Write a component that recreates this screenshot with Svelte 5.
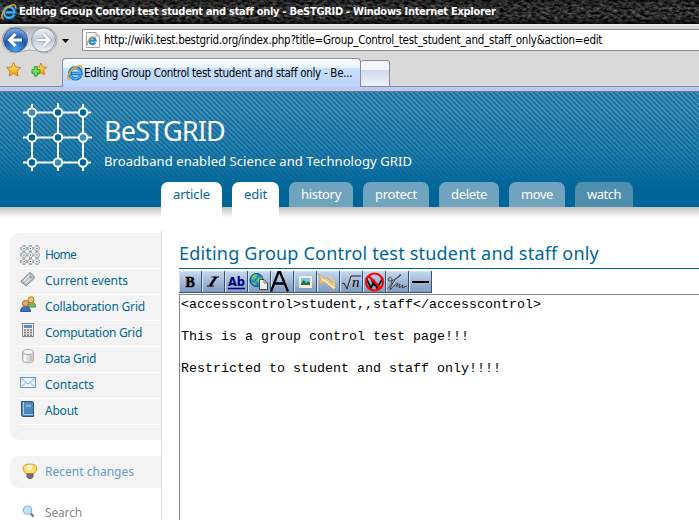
<script>
  const tabs = [
    { label: 'article', width: 61, text: 37, kind: 'on' },
    { label: 'edit', width: 47, text: 23, kind: 'on' },
    { label: 'history', width: 64, text: 40, kind: 'off' },
    { label: 'protect', width: 66, text: 42, kind: 'off' },
    { label: 'delete', width: 60, text: 36, kind: 'off' },
    { label: 'move', width: 56, text: 32, kind: 'off' },
    { label: 'watch', width: 58, text: 34, kind: 'dim' }
  ];
  const items = [
    { label: 'Home', icon: 'home', text: 31 },
    { label: 'Current events', icon: 'ticket', text: 83 },
    { label: 'Collaboration Grid', icon: 'people', text: 100 },
    { label: 'Computation Grid', icon: 'calc', text: 97 },
    { label: 'Data Grid', icon: 'data', text: 51 },
    { label: 'Contacts', icon: 'mail', text: 49 },
    { label: 'About', icon: 'book', text: 33 }
  ];
  const tools = ['bold', 'italic', 'link', 'globe', 'head', 'image', 'media', 'math', 'nowiki', 'sign', 'rule'];
  const nodes = [
    [34, 20, '#3f8cb5'], [60, 20, '#006699'], [85, 20, '#006699'],
    [34, 45, '#006699'], [60, 45, '#006699'], [85, 45, '#3f8cb5'],
    [34, 70, '#006699'], [60, 70, '#3f8cb5'], [85, 70, '#006699']
  ];
  const dots = [2, 8.5, 15];

  // Spreads the letters so a label fills the given width.
  function fit(node, width) {
    const natural = node.getBoundingClientRect().width;
    node.style.letterSpacing = `${(width - natural) / node.textContent.length}px`;
  }
</script>

{#snippet ie(size)}
  <svg class="ie" width={size} height={size} viewBox="0 0 16 16">
    <path d="M13.5 10.6A5.6 5.6 0 1 1 14 8.5H4.5" fill="none" stroke="#1769bd" stroke-width="3.4" />
    <path d="M13.2 10.5A5.4 5.4 0 1 1 13.6 8.3H5" fill="none" stroke="#45b5f2" stroke-width="1.8" />
    <path d="M2.6 15C-1.8 13.5 2.5 4.8 9.2 1.8C13.2 0 15.5.6 14.6 4.2" fill="none" stroke="#e8a31d" stroke-width="1.5" />
  </svg>
{/snippet}

<div class="screen">
  <header class="titlebar">
    <svg class="grain" width="699" height="24">
      <filter id="leather" x="0" y="0" width="100%" height="100%" color-interpolation-filters="sRGB">
        <feTurbulence type="fractalNoise" baseFrequency=".22 .4" numOctaves="3" seed="7" />
        <feColorMatrix values=".65 0 0 0 -.16  .65 0 0 0 -.16  .65 0 0 0 -.16  0 0 0 0 1" />
      </filter>
      <rect width="699" height="24" filter="url(#leather)" />
    </svg>
    <div class="titlerow">
      {@render ie(16)}
      <span use:fit={476}>Editing Group Control test student and staff only - BeSTGRID - Windows Internet Explorer</span>
    </div>
  </header>

  <div class="address">
    <svg class="nav" width="78" height="32" viewBox="0 0 78 32">
      <defs>
        <radialGradient id="back" cx=".5" cy=".9" r=".9"><stop offset="0" stop-color="#4ba5ee" /><stop offset=".55" stop-color="#1d55ad" /><stop offset="1" stop-color="#8db2e3" /></radialGradient>
        <linearGradient id="fwd" x2="0" y2="1"><stop offset="0" stop-color="#f5f6f8" /><stop offset=".5" stop-color="#bfc9d8" /><stop offset="1" stop-color="#f0f5fa" /></linearGradient>
        <linearGradient id="pill" x2="0" y2="1"><stop offset="0" stop-color="#b5b5b5" /><stop offset="1" stop-color="#f3f3f3" /></linearGradient>
      </defs>
      <path d="M15 3H44A12.5 12.5 0 0 1 44 29Q36 26 29 26Q22 27 15 29A13 13 0 0 1 15 3Z" fill="url(#pill)" stroke="#aaa" />
      <circle cx="15.5" cy="16" r="12" fill="url(#back)" stroke="#48699b" />
      <circle cx="43.5" cy="16" r="12" fill="url(#fwd)" stroke="#8796aa" />
      <path d="M22 16H10M15.5 10L9.5 16L15.5 22" fill="none" stroke="#fff" stroke-width="3" />
      <path d="M37 16H49M43.5 10L49.5 16L43.5 22" fill="none" stroke="#99a5b5" stroke-width="4" />
      <path d="M37 16H49M43.5 10L49.5 16L43.5 22" fill="none" stroke="#fff" stroke-width="2.5" />
      <path d="M62 15H69L65.5 19Z" fill="#000" />
    </svg>
    <div class="field">
      <svg width="16" height="18" viewBox="0 0 16 18">
        <path d="M1.5 1.5H11L14.5 5V16.500H1.500Z" fill="#fff" stroke="#a0a3a8" />
        <path d="M11 1.500V5H14.500" fill="#e5e5e5" stroke="#a0a3a8" />
        <path d="M10.200 11.500A3.200 3.200 0 1 1 10.600 9.600H5" fill="none" stroke="#218bd9" stroke-width="2.200" />
        <path d="M2.800 14C.5 11 7 5.300 10.900 6.200" fill="none" stroke="#e8a31d" stroke-width="1.300" />
      </svg>
      <span use:fit={498}>http://wiki.test.bestgrid.org/index.php?title=Group_Control_test_student_and_staff_only&amp;action=edit</span>
    </div>
  </div>

  <div class="pagetabs">
    <svg class="stars" width="62" height="34" viewBox="0 0 62 34">
      <defs><linearGradient id="gold" x2="0" y2="1"><stop offset="0" stop-color="#ffe977" /><stop offset="1" stop-color="#f5a000" /></linearGradient></defs>
      <path d="M12.500 9L14.700 13.800L20 14.400L16 18L17.300 23.500L12.500 20.800L7.700 23.500L9 18L5 14.400L10.300 13.800Z" fill="url(#gold)" stroke="#c77a17" />
      <path d="M41.500 9.500L43.300 13.700L47.500 14L44.300 17.300L45.500 22L41.500 20L37.500 22L38 17L36 14L40 13.600Z" fill="url(#gold)" stroke="#c77a17" />
      <path d="M34.500 13.500H37.500V16.500H40.500V20.500H37.500V23.500H34.500V20.500H32V16.500H34.500Z" fill="#74dd60" stroke="#28992f" />
    </svg>
    <div class="current">
      {@render ie(16)}
      <span use:fit={268}>Editing Group Control test student and staff only - Be...</span>
    </div>
    <div class="newtab"></div>
    <div class="rest"></div>
  </div>
  <div class="strip"></div>

  <div class="banner">
    <div class="stripes"></div>
    <div class="brand">
      <svg width="104" height="90" viewBox="0 0 104 90">
        <g transform="translate(-2 0)">
          <path d="M25 20.500H93M25 45.500H94M25 70.500H93M34 12V79M60 11V79M85 12V79" stroke="#fff" stroke-width="2" fill="none" />
          {#each nodes as [x, y, fill]}
            <circle cx={x} cy={y + 0.5} r="4.200" {fill} stroke="#fff" stroke-width="2" />
          {/each}
        </g>
      </svg>
      <div class="names">
        <div class="name"><span use:fit={121}>BeSTGRID</span></div>
        <div class="tagline"><span use:fit={308}>Broadband enabled Science and Technology GRID</span></div>
      </div>
    </div>
    <nav>
      {#each tabs as tab}
        <div class="tab {tab.kind}" style:width="{tab.width}px"><span use:fit={tab.text}>{tab.label}</span></div>
      {/each}
    </nav>
  </div>

  <div class="body">
    <aside>
      <div class="menu">
        {#each items as item}
          <div class="item">
            <svg width="25" height="22" viewBox="0 0 25 22">
              {#if item.icon === 'home'}
                <path d="M0 4.500H21M0 11H21M0 17.500H21M4 1V21M10.500 1V21M17 1V21" stroke="#aaa" stroke-width="3" stroke-dasharray="2 1" />
                {#each dots as x}{#each dots as y}
                  <circle cx={x + 2} cy={y + 2.500} r="2.300" fill="#fff" stroke="#aaa" stroke-width=".8" />
                  <circle cx={x + 2} cy={y + 2.500} r=".7" fill="#006699" />
                {/each}{/each}
              {:else if item.icon === 'ticket'}
                <path d="M1 11L10 2.500L13.500 5.500L14.500 8L6 16L4.500 14L2 13Z" fill="#bbb" stroke="#858585" />
                <path d="M3.500 11L9.500 5.500M5.500 13L12 7" stroke="#eee" stroke-width="1.300" />
                <path d="M9.500 8L12 6.500" stroke="#6fa4dc" stroke-width="2" />
              {:else if item.icon === 'people'}
                <path d="M6 11Q6 6 11 6Q15.500 6 15.500 11Z" fill="#79b85e" stroke="#4f9140" />
                <circle cx="11" cy="3.700" r="3" fill="#f3c064" stroke="#b58526" />
                <path d="M.6 15.500Q.6 10.500 5.500 10.500Q10.500 10.500 10.500 15.500Z" fill="#3974b9" stroke="#285997" />
                <circle cx="5.500" cy="7.500" r="3" fill="#efa36f" stroke="#a85b28" />
              {:else if item.icon === 'calc'}
                <rect x="2.500" y="1.500" width="11" height="13" fill="#ececec" stroke="#858585" />
                <rect x="4" y="3" width="8" height="3" fill="#628fc8" />
                <path d="M4 8H12M4 10.500H12M4 13H12" stroke="#777" stroke-width="1.500" stroke-dasharray="2 1" />
                <path d="M10 8H12" stroke="#d46a5e" stroke-width="1.500" />
              {:else if item.icon === 'data'}
                <path d="M2.500 4V12.500C2.500 15.500 13.500 15.500 13.500 12.500V4" fill="#ddd" stroke="#aaa" />
                <path d="M5 7V13" stroke="#fff" stroke-width="2" /><path d="M11 7V13" stroke="#c3c3c3" stroke-width="3" />
                <ellipse cx="8" cy="4" rx="5.500" ry="2.500" fill="#f4f4f4" stroke="#aaa" />
              {:else if item.icon === 'mail'}
                <rect x=".5" y="3.500" width="15" height="10" fill="#eef5ff" stroke="#6896d0" />
                <path d="M1.500 4.500L8 10L14.500 4.500M2 12.500L6 8.500M14 12.500L10 8.500" fill="none" stroke="#83a9d8" />
              {:else}
                <path d="M1.500 1.500H12.500L13.500 3V16.500H2.500L1.500 15Z" fill="#4e87bb" stroke="#2d5276" />
                <path d="M3.500 2V14.500H13" fill="none" stroke="#a7cae6" />
                <path d="M6 4.500H11V7H6Z" fill="#83b3da" />
              {/if}
            </svg>
            <span use:fit={item.text}>{item.label}</span>
          </div>
        {/each}
      </div>
      <div class="recent">
        <svg width="25" height="22" viewBox="0 0 25 22">
          <path d="M6.500 14Q3 11 3 8Q3.500 4 10 4Q16 4 17 8Q16.500 12 13.500 14Z" fill="#ffdc68" stroke="#d69c28" />
          <path d="M6 6Q9 4 13 6L11 10H8Z" fill="#fff9db" />
          <path d="M7 14H13V17L11 18.500H9L7 17Z" fill="#777" stroke="#555" />
        </svg>
        <span use:fit={89}>Recent changes</span>
      </div>
      <div class="search">
        <svg width="25" height="22" viewBox="0 0 25 22">
          <path d="M9.500 12.500L12.500 16" stroke="#8b7065" stroke-width="2.500" />
          <circle cx="6" cy="9" r="4.500" fill="#c3e2fb" stroke="#8fb2dc" stroke-width="1.300" />
        </svg>
        <span use:fit={37}>Search</span>
      </div>
    </aside>

    <main>
      <h1><span use:fit={420}>Editing Group Control test student and staff only</span></h1>
      <div class="toolbar">
        {#each tools as tool}
          <div class="tool">
            <svg width="23" height="22" viewBox="0 0 23 22">
              {#if tool === 'bold'}
                <text x="6.500" y="15.500" font-family="Liberation Serif, serif" font-weight="bold" font-size="14" stroke="#000" stroke-width=".5">B</text>
              {:else if tool === 'italic'}
                <path d="M9.500 6H17M5 15H12" stroke="#000" stroke-width="1.200" /><path d="M14 6L8 15" stroke="#000" stroke-width="2.300" />
              {:else if tool === 'link'}
                <text x="3" y="15" font-family="DejaVu Sans Condensed, sans-serif" font-weight="bold" font-size="13" fill="#000080" textLength="17" lengthAdjust="spacingAndGlyphs">Ab</text>
                <path d="M3 17.500H20" stroke="#000080" stroke-width="1.500" />
              {:else if tool === 'globe'}
                <circle cx="8.500" cy="9" r="6.500" fill="#2588d2" stroke="#123b6e" />
                <path d="M3 7L6 3L10 4L8 7L5 9ZM10 7L14 6L15 9L11 12L8 10ZM4 11L8 12L7 15Z" fill="#65cc54" />
                <path d="M11.500 8.500H16L19.500 12V18.500H11.500Z" fill="#eee" stroke="#444" /><path d="M16 9V12H19" fill="none" stroke="#777" />
              {:else if tool === 'head'}
                <path d="M0 20.500L7.500 1H9L17 20.500M3.500 12.500H13" fill="none" stroke="#000" stroke-width="2.300" />
              {:else if tool === 'image'}
                <rect x="5" y="5" width="13" height="12" fill="#f7eed4" /><rect x="7" y="7" width="9" height="7" fill="#7cc1ec" />
                <path d="M7 12L10 9L12 12L14 10L16 12V14H7Z" fill="#287345" />
              {:else if tool === 'media'}
                <path d="M1 2Q5 7 11 8L19 16L17 19L8 11Q6 10 2 14Q5 8 1 2Z" fill="#f2cf84" stroke="#c79d58" stroke-width=".7" />
                <path d="M13 6L17 10V14L11 11" fill="none" stroke="#efcb83" stroke-width="1.800" />
                <path d="M5 8L17 17" fill="none" stroke="#fff0bd" stroke-width="1.200" />
              {:else if tool === 'math'}
                <path d="M2 13L4 12L7 18L11 5H21" fill="none" stroke="#222" />
                <text x="12" y="16" font-family="Liberation Serif, serif" font-style="italic" font-size="15">n</text>
              {:else if tool === 'nowiki'}
                <path d="M3 7L8 17L11 10L14 17L20 7M8 8L12 15" fill="none" stroke="#000" stroke-width="1.700" />
                <circle cx="11.500" cy="11" r="8.500" fill="none" stroke="#f00" stroke-width="2.200" /><path d="M5.500 5L17.500 17" stroke="#f00" stroke-width="2.200" />
              {:else if tool === 'sign'}
                <path d="M1 18C3 17 6 13 6 9C6 5 2 6 2 9C3 12 10 8 14 5C16 3 14 3 12 6C8 9 5 14 4 19C7 16 9 13 12 12L10 16L14 13L13 17L17 14L16 17L21 15" fill="none" stroke="#444" stroke-width="1" />
              {:else}
                <path d="M3 11H20" stroke="#000" stroke-width="2" />
              {/if}
            </svg>
          </div>
        {/each}
      </div>
      <pre class="editor">{'<accesscontrol>student,,staff</accesscontrol>\n\nThis is a group control test page!!!\n\nRestricted to student and staff only!!!!'}</pre>
    </main>
  </div>
</div>

<style>
  .screen { width: 699px; height: 520px; overflow: hidden; display: flex; flex-direction: column; background: #fff; font-family: "Noto Sans", sans-serif; font-size: 12px; }
  .screen span { white-space: nowrap; display: inline-block; }
  svg { display: block; flex: none; }
  .titlebar { height: 24px; flex: none; position: relative; background: #202020; color: #fff; }
  .grain { position: absolute; left: 0; top: 0; }
  .titlerow { position: relative; display: flex; align-items: center; height: 24px; gap: 2px; padding-left: 1px; box-sizing: border-box; font: bold 11px/22px "DejaVu Sans Condensed", "Noto Sans", sans-serif; background: linear-gradient(#0004, #0000 25% 75%, #000b); }
  .titlerow span { padding-bottom: 1px; }
  .address { height: 30px; flex: none; display: flex; background: linear-gradient(#eee, #d9d9d9 10%); }
  .nav { width: 78px; margin: 0 4px 0 0; }
  .field { flex: 1; margin-top: 5px; height: 20px; border: 1px solid #8f8f91; border-right: 0; background: #fff; display: flex; align-items: center; gap: 3px; padding-left: 2px; font: 11.5px/22px "DejaVu Sans Condensed", sans-serif; color: #000; }
  .pagetabs { height: 33px; flex: none; display: flex; align-items: flex-end; background: #d9d9d9; }
  .stars { height: 32px; width: 62px; border-bottom: 1px solid #8b8ba0; }
  .current { box-sizing: border-box; width: 299px; height: 29px; border: 1px solid #8b8ba0; border-bottom: 0; border-radius: 4px 4px 0 0; background: linear-gradient(#fdfeff, #e8f3ff 32%, #c5e1fd 34%, #bcd2fc); display: flex; align-items: center; gap: 1px; padding-left: 4px; font: 11.5px/28px "DejaVu Sans Condensed", sans-serif; }
  .newtab { box-sizing: border-box; width: 29px; height: 27px; border: 1px solid #8b8ba0; border-left: 0; border-radius: 3px 3px 0 0; background: linear-gradient(#f5f6ff 35%, #d3d9eb 37%, #eef2ff); }
  .rest { flex: 1; height: 1px; background: #8b8ba0; }
  .strip { height: 5px; flex: none; box-sizing: border-box; border-bottom: 1px solid #777; background: #b8c9fa; }
  .banner { height: 115px; flex: none; position: relative; z-index: 1; display: flex; flex-direction: column; background: #006699; }
  .stripes { position: absolute; inset: 0; background: linear-gradient(45deg, #408cb5 25%, #12709f 25% 50%, #408cb5 50% 75%, #12709f 75%) 0 0 / 5px 5px; mask-image: linear-gradient(#000 15%, #0009 50%, #0000 85%); }
  .brand { position: relative; height: 90px; display: flex; color: #fff; }
  .names { display: flex; flex-direction: column; padding-top: 19px; }
  .name { font-size: 27px; line-height: 40px; height: 41px; }
  .tagline { font-size: 13px; line-height: 18px; }
  nav { position: relative; display: flex; gap: 10px; padding-left: 161px; height: 25px; }
  .tab { box-sizing: border-box; padding-left: 12px; border-radius: 7px 7px 0 0; font-size: 13px; line-height: 25px; color: #fff; }
  .on { height: 35px; background: #fff; color: #006699; }
  .off { background: #70a3bd; }
  .dim { background: #4f8eac; }
  .body { flex: 1; display: flex; background: linear-gradient(#c1c1c1, #dadada 4px, #f4f4f4 9px, #fff 10px); }
  aside { width: 162px; flex: none; box-sizing: border-box; margin-top: 24px; padding-left: 10px; border-right: 1px solid #ddd; color: #006699; }
  .menu { margin-top: 2px; box-sizing: border-box; height: 207px; padding: 10px 0 0 8px; border-radius: 10px 0 0 10px; background: #f3f3f3; }
  .item { display: flex; box-sizing: border-box; height: 26px; border-bottom: 1px solid #fff; padding-left: 2px; line-height: 24px; }
  .item svg { margin-top: 1px; }
  .recent { display: flex; align-items: center; box-sizing: border-box; margin-top: 16px; height: 32px; padding: 0 0 2px 10px; border-radius: 10px 0 0 10px; background: #f3f3f3; color: #6699cc; }
  .search { display: flex; margin-top: 13px; padding-left: 12px; line-height: 24px; color: #888; }
  .search svg { width: 23px; }
  main { flex: 1; display: flex; flex-direction: column; padding: 34px 0 0 17px; }
  h1 { flex: none; margin: 0; height: 28px; box-sizing: border-box; border-bottom: 1px solid #006699; font-size: 18px; font-weight: 400; line-height: 24px; color: #006699; }
  .toolbar { flex: none; display: flex; margin-top: 2px; height: 22px; }
  .tool { box-sizing: border-box; width: 23px; overflow: hidden; border-right: 1px solid #355275; border-bottom: 1px solid #355275; box-shadow: inset 1px 1px #d4e2f5; background: linear-gradient(#c7d8ee, #809cc2); }
  .editor { flex: 1; margin: 1px 0 0; border: 1px solid #848484; border-right: 0; border-bottom: 0; padding: 2px 0 0 1px; background: #fff; color: #000; font: 13.333px/16px "Liberation Mono", monospace; }
</style>
